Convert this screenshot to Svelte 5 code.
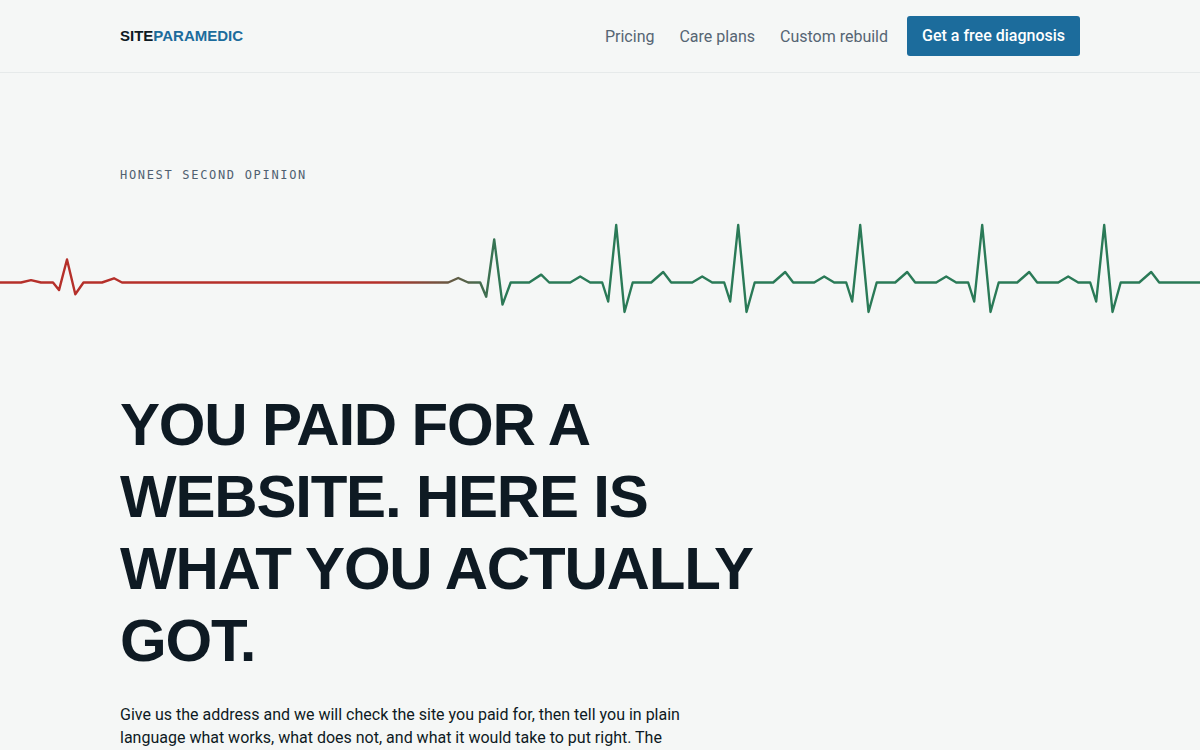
<script lang="ts">
	type Beat = { x: number; strength: number };

	const baseline = 71.5;

	const beats: Beat[] = [
		{ x: 67, strength: 0.4 },
		{ x: 494.2, strength: 0.75 },
		{ x: 616.2, strength: 1 },
		{ x: 738.2, strength: 1 },
		{ x: 860.2, strength: 1 },
		{ x: 982.2, strength: 1 },
		{ x: 1104.2, strength: 1 }
	];

	// one heartbeat: offset from the peak, height above the baseline
	const shape = [
		[-46, 0],
		[-36, 6],
		[-26, 0],
		[-14, 0],
		[-8, -19],
		[0, 57.5],
		[8.3, -29.5],
		[16.5, 0],
		[35, 0],
		[47, 10.5],
		[55, 0]
	];

	const points = beats.flatMap((beat) =>
		shape.map(([dx, dy]) => `${beat.x + dx} ${baseline - dy * beat.strength}`)
	);
	const trace = `M0 ${baseline} L${points.join(' L')} L1200 ${baseline}`;

	const links = [
		{ label: 'Pricing', href: '#pricing' },
		{ label: 'Care plans', href: '#care-plans' },
		{ label: 'Custom rebuild', href: '#custom-rebuild' }
	];
</script>

<header>
	<div class="wrap bar">
		<a class="brand" href="#top">SITE<span>PARAMEDIC</span></a>
		<nav>
			<div class="links">
				{#each links as link (link.href)}
					<a href={link.href}>{link.label}</a>
				{/each}
			</div>
			<a class="cta" href="#diagnosis">Get a free diagnosis</a>
		</nav>
	</div>
</header>

<main>
	<div class="wrap">
		<p class="eyebrow">Honest second opinion</p>
	</div>

	<svg class="pulse" viewBox="0 0 1200 144" aria-hidden="true">
		<defs>
			<linearGradient id="recovery" gradientUnits="userSpaceOnUse" x1="380" y1="0" x2="505" y2="0">
				<stop offset="0" stop-color="#b5302a" />
				<stop offset="1" stop-color="#2a7a57" />
			</linearGradient>
		</defs>
		<path d={trace} />
	</svg>

	<div class="wrap">
		<h1>You paid for a website. Here is what you actually got.</h1>
		<p class="lead">
			Give us the address and we will check the site you paid for, then tell you in plain language
			what works, what does not, and what it would take to put right. The
		</p>
	</div>
</main>

<style>
	:global(body) {
		margin: 0;
		background: #f5f7f6;
		color: #0e1a23;
		font-family: Roboto, 'Liberation Sans', sans-serif;
		font-size: 16px;
	}

	.wrap {
		max-width: 960px;
		margin: 0 auto;
		padding: 0 24px;
	}

	a {
		text-decoration: none;
	}

	header {
		border-bottom: 1px solid #e6eaea;
	}

	.bar {
		display: flex;
		align-items: center;
		justify-content: space-between;
		padding-top: 16px;
		padding-bottom: 16px;
	}

	.brand {
		color: #0e1a23;
		font-family: 'Liberation Sans', Arial, sans-serif;
		font-size: 15px;
		font-weight: 700;
		line-height: 20px;
	}

	.brand span {
		color: #1c6c9c;
	}

	nav {
		display: flex;
		align-items: center;
		gap: 19px;
	}

	.links {
		display: flex;
		gap: 25px;
	}

	.links a {
		color: #566573;
	}

	.cta {
		padding: 8px 15px;
		border-radius: 3px;
		background: #1c6c9c;
		color: #fff;
		font-weight: 500;
		line-height: 24px;
	}

	.eyebrow {
		margin: 92px 0 0;
		color: #4f6070;
		font-family: 'DejaVu Sans Mono', monospace;
		font-size: 12px;
		letter-spacing: 0.14em;
		line-height: 20px;
		text-transform: uppercase;
	}

	.pulse {
		display: block;
		width: 100%;
		margin-top: 26px;
	}

	.pulse path {
		fill: none;
		stroke: url(#recovery);
		stroke-width: 2.4;
		stroke-linejoin: round;
	}

	h1 {
		max-width: 680px;
		margin: 34px 0 0;
		font-family: 'Liberation Sans', Arial, sans-serif;
		font-size: 60px;
		font-weight: 700;
		letter-spacing: -0.02em;
		line-height: 72px;
		text-transform: uppercase;
	}

	.lead {
		max-width: 580px;
		margin: 26px 0 0;
		line-height: 23px;
	}
</style>
